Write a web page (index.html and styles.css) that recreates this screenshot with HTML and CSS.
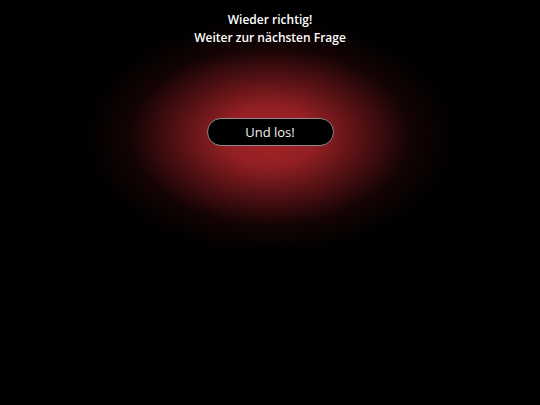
FILE: index.html
```html
<!DOCTYPE html>
<html lang="de">
<head>
<meta charset="utf-8">
<link rel="stylesheet" href="styles.css">
</head>
<body>
<main class="screen">
  <div class="glow"></div>
  <div class="content">
    <p class="title">Wieder richtig!</p>
    <p class="title">Weiter zur nächsten Frage</p>
    <button class="start">Und los!</button>
  </div>
</main>
</body>
</html>
```
FILE: styles.css
```css
html, body {
  margin: 0;
  padding: 0;
  background: #000;
}
.screen {
  position: relative;
  width: 540px;
  height: 405px;
  overflow: hidden;
  background: #000;
  font-family: "Open Sans", "Noto Sans", sans-serif;
  color: #fff;
}
.glow {
  position: absolute;
  left: 85px;
  top: 18px;
  width: 370px;
  height: 236px;
  background: radial-gradient(ellipse 50% 50% at 50% 50%, rgba(165,36,40,1) 0%, rgba(155,33,37,0.95) 25%, rgba(115,23,27,0.72) 50%, rgba(55,9,11,0.38) 75%, rgba(0,0,0,0) 100%);
}
.content {
  position: relative;
  display: flex;
  flex-direction: column;
  align-items: center;
  padding-top: 11px;
}
.title {
  margin: 0;
  font-size: 12px;
  font-weight: 600;
  line-height: 18px;
}
.start {
  margin-top: 71px;
  width: 127px;
  height: 28px;
  border: 1px solid #8a8a8a;
  border-radius: 14px;
  background: #000;
  color: #f2f2f2;
  font-family: "Open Sans", "Noto Sans", sans-serif;
  font-size: 13px;
  font-weight: 400;
  padding: 0;
}
```
